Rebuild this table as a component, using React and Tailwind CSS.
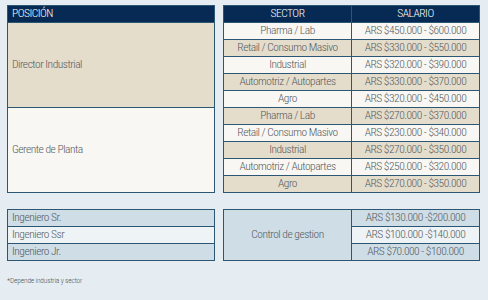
import React from 'react';

const sectors = ['Pharma / Lab', 'Retail / Consumo Masivo', 'Industrial', 'Automotriz / Autopartes', 'Agro'];

const rows = [
    ['ARS $450.000 - $600.000', 'ARS $330.000 - $550.000', 'ARS $320.000 - $390.000', 'ARS $330.000 - $370.000', 'ARS $320.000 - $450.000'],
    ['ARS $270.000 - $370.000', 'ARS $230.000 - $340.000', 'ARS $270.000 - $350.000', 'ARS $250.000 - $320.000', 'ARS $270.000 - $350.000'],
];

const juniors = [
    { name: 'Ingeniero Sr.', pay: 'ARS $130.000 -$200.000', light: false },
    { name: 'Ingeniero Ssr', pay: 'ARS $100.000 -$140.000', light: true },
    { name: 'Ingeniero Jr.', pay: 'ARS $70.000 - $100.000', light: false },
];

const font = { fontFamily: '"Roboto Condensed", "Liberation Sans Narrow", "Liberation Sans", sans-serif' };

export default function App() {
    const flat = rows.flat().map((pay, i) => ({ sector: sectors[i % 5], pay, beige: i % 2 === 1 }));

    return (
        <div className="w-[488px] h-[300px] bg-[#e5edf2] px-[7px] pt-[5px] text-[11.5px] font-light tracking-[-0.5px] text-[#565b61] leading-none" style={font}>
            {/* Main table */}
            <div className="flex gap-[8px]">
                <table className="w-[208px] border-collapse border-[1.5px] border-[#2b5674]">
                    <tbody>
                        <tr className="h-[17px] bg-[#062a54] text-white">
                            <td className="px-[4px]">POSICIÓN</td>
                        </tr>
                        <tr className="h-[85px] bg-[#e5ddcc]">
                            <td className="px-[4px] border border-[#2b5674]">Director Industrial</td>
                        </tr>
                        <tr className="h-[85px] bg-[#f8f7f3]">
                            <td className="px-[4px] border border-[#2b5674]">Gerente de Planta</td>
                        </tr>
                    </tbody>
                </table>

                <table className="w-[257px] border-collapse border-[1.5px] border-[#2b5674] text-center">
                    <tbody>
                        <tr className="h-[17px] bg-[#062a54] text-white">
                            <td className="w-[128px] border-r border-[#2b5674]">SECTOR</td>
                            <td>SALARIO</td>
                        </tr>
                        {flat.map((r, i) => (
                            <tr key={i} className={`h-[17px] ${r.beige ? 'bg-[#e5ddcc]' : 'bg-[#f8f7f3]'}`}>
                                <td className="border border-[#2b5674]">{r.sector}</td>
                                <td className="border border-[#2b5674]">{r.pay}</td>
                            </tr>
                        ))}
                    </tbody>
                </table>
            </div>

            {/* Engineering table */}
            <div className="flex gap-[8px] mt-[16px]">
                <table className="w-[208px] border-collapse border-[1.5px] border-[#2b5674]">
                    <tbody>
                        {juniors.map((j) => (
                            <tr key={j.name} className={`h-[17px] ${j.light ? 'bg-[#eef3f6]' : 'bg-[#cfdde6]'}`}>
                                <td className="px-[4px] border border-[#2b5674]">{j.name}</td>
                            </tr>
                        ))}
                    </tbody>
                </table>

                <table className="w-[257px] border-collapse border-[1.5px] border-[#2b5674] text-center">
                    <tbody>
                        {juniors.map((j, i) => (
                            <tr key={j.name} className="h-[17px]">
                                {i === 0 && (
                                    <td rowSpan={3} className="w-[128px] bg-[#cfdde6] border border-[#2b5674]">Control de gestion</td>
                                )}
                                <td className={`border border-[#2b5674] ${j.light ? 'bg-[#eef3f6]' : 'bg-[#cfdde6]'}`}>{j.pay}</td>
                            </tr>
                        ))}
                    </tbody>
                </table>
            </div>

            <p className="mt-[16px] text-[7.5px] tracking-[-0.2px]">*Depende industria y sector</p>
        </div>
    );
}
